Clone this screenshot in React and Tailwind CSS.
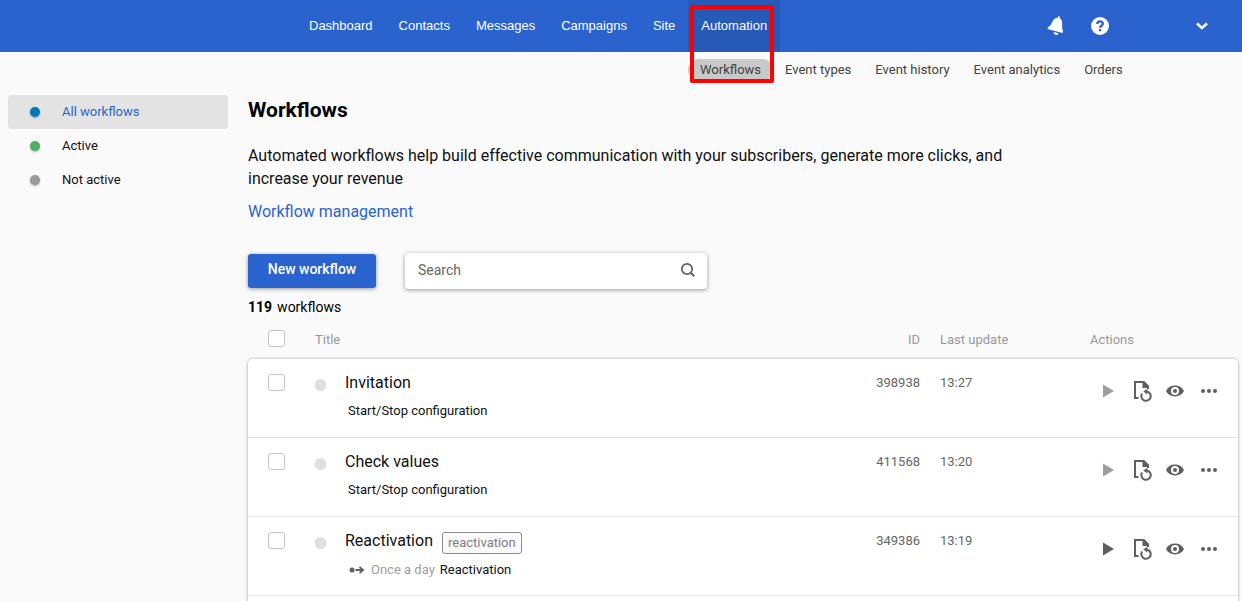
import React, { useState } from "react";

const NAV_ITEMS = ["Dashboard", "Contacts", "Messages", "Campaigns", "Site", "Automation"];

const SUB_ITEMS = ["Workflows", "Event types", "Event history", "Event analytics", "Orders"];

const FILTERS = [
  { label: "All workflows", dot: "bg-[#0277bd]" },
  { label: "Active", dot: "bg-[#4caf62]" },
  { label: "Not active", dot: "bg-[#999999]" },
];

const WORKFLOWS = [
  { id: "398938", title: "Invitation", updated: "13:27", note: "Start/Stop configuration" },
  { id: "411568", title: "Check values", updated: "13:20", note: "Start/Stop configuration" },
  {
    id: "349386",
    title: "Reactivation",
    updated: "13:19",
    tag: "reactivation",
    schedule: "Once a day",
    note: "Reactivation",
    canStart: true,
  },
];

// --- Icons ---
function BellIcon() {
  return (
    <svg width="18" height="20" viewBox="0 0 18 20" fill="#fff">
      <path d="M10.500 1.700 11.300.2l1.500.3v1.700c1.500.9 2.200 2.300 2.300 4.300l.1 5.500c.1 1.500.4 2.300.9 3.200l-.4 1.800L.5 13l.3-1.600c1.500-.8 2.500-1.700 3.300-3.200l1.700-3.300C6.800 3 8.300 1.800 10.500 1.700z" />
      <path d="m6.500 15.900 5 1.400c-.4 1.200-1.500 1.800-2.700 1.500s-2.100-1.500-2.300-2.900z" />
    </svg>
  );
}

function HelpIcon() {
  return (
    <svg width="18" height="18" viewBox="0 0 18 18" fill="none">
      <circle cx="9" cy="9" r="9" fill="#fff" />
      <path d="M6.300 7.100C6.300 5.200 7.500 4.400 9 4.400s2.800.8 2.800 2.400c0 1.900-2.700 2-2.700 4" stroke="#2a63cd" strokeWidth="2.300" />
      <rect x="8" y="12" width="2.200" height="2.200" fill="#2a63cd" />
    </svg>
  );
}

function ChevronIcon() {
  return (
    <svg width="12" height="8" viewBox="0 0 12 8" fill="none" stroke="#fff" strokeWidth="2.600">
      <path d="m1 1.500 5 4.500 5-4.500" />
    </svg>
  );
}

function SearchIcon() {
  return (
    <svg width="16" height="16" viewBox="0 0 16 16" fill="none" stroke="#5f5f5f">
      <circle cx="7" cy="7" r="5.200" strokeWidth="1.700" />
      <path d="m10.700 10.700 3.600 3.600" strokeWidth="2" />
    </svg>
  );
}

function PlayIcon() {
  return (
    <svg width="12" height="14" viewBox="0 0 12 14" fill="currentColor">
      <path d="M1 .5 12 7 1 13.500z" />
    </svg>
  );
}

function FileHistoryIcon() {
  return (
    <svg width="18" height="22" viewBox="0 0 18 22" fill="none" stroke="#5f5f5f">
      <path d="M4.500 18H1V2h8.500l4.500 4.500V9" strokeWidth="2" />
      <path d="M8.500 1H10l5 5v2H8.500z" fill="#5f5f5f" stroke="none" />
      <path d="M8.100 13.500A4.700 4.700 0 1 0 13 11.500" strokeWidth="2" />
      <path d="M13.300 8.800v5.600L9.300 11.500z" fill="#5f5f5f" stroke="none" />
    </svg>
  );
}

function EyeIcon() {
  return (
    <svg width="18" height="12" viewBox="0 0 18 12">
      <path d="M0 6C1.800 2.300 5.200.6 9 .6S16.200 2.300 18 6c-1.800 3.700-5.200 5.400-9 5.400S1.800 9.700 0 6z" fill="#5f5f5f" />
      <circle cx="9" cy="6" r="4" fill="#fff" />
      <circle cx="9" cy="6" r="2" fill="#5f5f5f" />
    </svg>
  );
}

function DotsIcon() {
  return (
    <svg width="16" height="4" viewBox="0 0 16 4" fill="#5f5f5f">
      <circle cx="2" cy="2" r="2" />
      <circle cx="8" cy="2" r="2" />
      <circle cx="14" cy="2" r="2" />
    </svg>
  );
}

function TriggerIcon() {
  return (
    <svg width="18" height="8" viewBox="0 0 18 8" fill="#5f5f5f">
      <circle cx="4" cy="4" r="2.500" />
      <path d="M7.500 3.100h5L11 1.400l1-1.200L16.500 4 12 7.800l-1-1.200 1.500-1.700h-5z" />
    </svg>
  );
}

function Checkbox({ label }) {
  return (
    <input
      type="checkbox"
      aria-label={label}
      className="block size-[17px] appearance-none rounded-[3px] border border-[#c4c4c4] bg-white checked:bg-[#2a63cd]"
    />
  );
}

// --- Top bars ---
function Header() {
  return (
    <header>
      <div className="flex h-[52px] items-center bg-[#2a63cd] pr-[34px] pl-[296px]">
        <nav className="flex h-full flex-1 font-['Liberation_Sans',Arial,sans-serif] text-[13px] text-white">
          {NAV_ITEMS.map((item) => (
            <a
              key={item}
              href="#"
              className={`relative flex items-center px-[13px] ${item === "Automation" ? "bg-[#2759b6]" : ""}`}
            >
              {item}
              {item === "Automation" && (
                <span className="pointer-events-none absolute top-[5px] left-[2px] z-10 h-[78px] w-[84px] rounded-[2px] border-4 border-[#ff0000]" />
              )}
            </a>
          ))}
        </nav>
        <button type="button" aria-label="Notifications"><BellIcon /></button>
        <button type="button" aria-label="Help" className="ml-[26px]"><HelpIcon /></button>
        <button type="button" aria-label="Account" className="ml-[87px]"><ChevronIcon /></button>
      </div>
      <nav className="flex h-[43px] items-start gap-6 pt-[7px] pl-[688px] text-[13px] leading-[22px] whitespace-nowrap text-[#424242]">
        {SUB_ITEMS.map((item) => (
          <a
            key={item}
            href="#"
            className={item === "Workflows" ? "-mr-3 rounded-full bg-[#c9c9c9] px-3" : ""}
          >
            {item}
          </a>
        ))}
      </nav>
    </header>
  );
}

function Sidebar({ selected, onSelect }) {
  return (
    <aside className="w-[220px] shrink-0">
      {FILTERS.map((filter) => (
        <button
          key={filter.label}
          type="button"
          onClick={() => onSelect(filter.label)}
          className={`flex h-[34px] w-full items-center gap-[22px] rounded pl-[22px] text-[13px] ${
            selected === filter.label ? "bg-[#e3e3e3] text-[#2a63cd]" : "text-[#111111]"
          }`}
        >
          <span className={`size-[10px] rounded-full shadow-[0_1px_2px_rgba(0,0,0,0.3)] ${filter.dot}`} />
          {filter.label}
        </button>
      ))}
    </aside>
  );
}

// --- Table ---
function WorkflowRow({ workflow }) {
  return (
    <tr className="h-[79px] align-top first:[&>td:first-child]:rounded-tl-[5px] first:[&>td:last-child]:rounded-tr-[5px] [&>td]:border-b [&>td]:border-[#e3e3e3] [&>td]:bg-white">
      <td className="pt-[15px] pl-5"><Checkbox label={`Select ${workflow.title}`} /></td>
      <td className="pt-5">
        <span className="block size-[11px] rounded-full bg-[#e0e0e0] shadow-[0_1px_2px_rgba(0,0,0,0.15)]" />
      </td>
      <td className="pt-3 pb-[15px]">
        <div className="flex items-start gap-[9px]">
          <a href="#" className="text-base text-[#111111]">{workflow.title}</a>
          {workflow.tag && (
            <span className="mt-[3px] rounded-[3px] border border-[#8c8c8c] bg-[#fafafa] px-[5px] text-[13px] leading-5 text-[#808080]">
              {workflow.tag}
            </span>
          )}
        </div>
        <div className="mt-[6px] flex items-center gap-[5px] pl-[3px] text-[13px] leading-5 text-[#111111]">
          {workflow.schedule && (
            <>
              <TriggerIcon />
              <span className="text-[#9e9e9e]">{workflow.schedule}</span>
            </>
          )}
          <span>{workflow.note}</span>
        </div>
      </td>
      <td className="pt-[14px] pr-5 text-right text-[13px] leading-5 text-[#666666]">{workflow.id}</td>
      <td className="pt-[14px] text-[13px] leading-5 text-[#666666]">{workflow.updated}</td>
      <td className="pt-[21px]">
        <div className="flex items-center pl-3">
          <button type="button" aria-label="Start" className={workflow.canStart ? "text-[#5f5f5f]" : "text-[#9e9e9e]"}>
            <PlayIcon />
          </button>
          <button type="button" aria-label="Versions" className="ml-5"><FileHistoryIcon /></button>
          <button type="button" aria-label="View" className="ml-[14px]"><EyeIcon /></button>
          <button type="button" aria-label="More" className="ml-[17px]"><DotsIcon /></button>
        </div>
      </td>
    </tr>
  );
}

function WorkflowTable() {
  return (
    <table className="w-full table-fixed border-separate border-spacing-0">
      <colgroup>
        <col className="w-[67px]" />
        <col className="w-[30px]" />
        <col />
        <col className="w-[80px]" />
        <col className="w-[150px]" />
        <col className="w-[148px]" />
      </colgroup>
      <thead>
        <tr className="h-10 text-left text-[13px] text-[#999999] [&>th]:pt-[2px] [&>th]:font-normal">
          <th className="pb-1 pl-5"><Checkbox label="Select all" /></th>
          <th colSpan="2">Title</th>
          <th className="pr-5 text-right">ID</th>
          <th>Last update</th>
          <th>Actions</th>
        </tr>
      </thead>
      <tbody className="rounded-[5px] shadow-[0_0_3px_rgba(0,0,0,0.4)]">
        {WORKFLOWS.map((workflow) => (
          <WorkflowRow key={workflow.id} workflow={workflow} />
        ))}
        <tr className="h-20"><td colSpan="6" className="bg-white" /></tr>
      </tbody>
    </table>
  );
}

function App() {
  const [selected, setSelected] = useState("All workflows");
  const [search, setSearch] = useState("");

  return (
    <div className="h-screen overflow-hidden bg-[#fafafa] font-[Roboto,sans-serif] text-black">
      <Header />
      <div className="flex gap-5 pr-1 pl-2">
        <Sidebar selected={selected} onSelect={setSelected} />
        <main className="min-w-0 flex-1">
          <h1 className="pt-px text-[21px] leading-7 font-bold">Workflows</h1>
          <p className="mt-5 max-w-[780px] text-base leading-[23px] text-[#111111]">
            Automated workflows help build effective communication with your subscribers, generate more clicks, and
            increase your revenue
          </p>
          <a href="#" className="mt-[10px] block text-base text-[#2a63cd]">Workflow management</a>
          <div className="mt-[29px] flex items-center gap-[29px]">
            <button
              type="button"
              className="h-[34px] w-32 rounded-[3px] bg-[#2a63cd] pb-1 text-sm font-medium text-white shadow-[0_1px_4px_rgba(0,0,0,0.4)]"
            >
              New workflow
            </button>
            <label className="flex h-9 w-[302px] items-center rounded bg-white pr-[11px] pb-[2px] pl-[13px] shadow-[0_1px_4px_rgba(0,0,0,0.4)]">
              <input
                type="text"
                aria-label="Search"
                placeholder="Search"
                value={search}
                onChange={(e) => setSearch(e.target.value)}
                className="min-w-0 flex-1 text-sm outline-none placeholder:text-[#666666]"
              />
              <SearchIcon />
            </label>
          </div>
          <p className="mt-2 text-sm"><b className="mr-[5px]">119</b>workflows</p>
          <div className="mt-[2px]">
            <WorkflowTable />
          </div>
        </main>
      </div>
    </div>
  );
}

export default App;
